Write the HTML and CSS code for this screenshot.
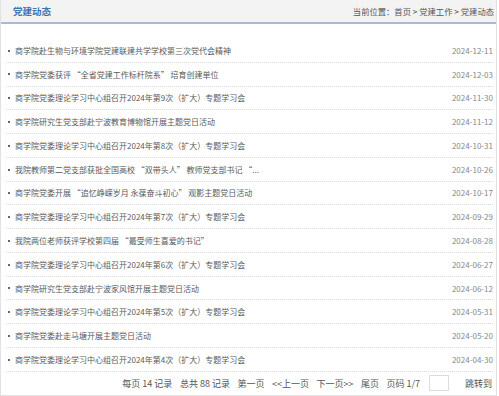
FILE: index.html
```html
<!DOCTYPE html>
<html lang="zh-CN">
<head>
    <meta charset="UTF-8">
    <title>党建动态</title>
    <link rel="stylesheet" href="styles.css">
</head>
<body>
    <div class="panel">
        <div class="panel-head">
            <h2>党建动态</h2>
            <div class="crumbs">当前位置：<a href="#">首页</a> &gt; <a href="#">党建工作</a> &gt; <a href="#">党建动态</a></div>
        </div>

        <ul class="news">
            <li><a href="#">商学院赴生物与环境学院党建联建共学学校第三次党代会精神</a><span class="date">2024-12-11</span></li>
            <li><a href="#">商学院党委获评 “全省党建工作标杆院系” 培育创建单位</a><span class="date">2024-12-03</span></li>
            <li><a href="#">商学院党委理论学习中心组召开2024年第9次（扩大）专题学习会</a><span class="date">2024-11-30</span></li>
            <li><a href="#">商学院研究生党支部赴宁波教育博物馆开展主题党日活动</a><span class="date">2024-11-12</span></li>
            <li><a href="#">商学院党委理论学习中心组召开2024年第8次（扩大）专题学习会</a><span class="date">2024-10-31</span></li>
            <li><a href="#">我院教师第二党支部获批全国高校 “双带头人” 教师党支部书记 “...</a><span class="date">2024-10-26</span></li>
            <li><a href="#">商学院党委开展 “追忆峥嵘岁月 永葆奋斗初心” 观影主题党日活动</a><span class="date">2024-10-17</span></li>
            <li><a href="#">商学院党委理论学习中心组召开2024年第7次（扩大）专题学习会</a><span class="date">2024-09-29</span></li>
            <li><a href="#">我院两位老师获评学校第四届 “最受师生喜爱的书记”</a><span class="date">2024-08-28</span></li>
            <li><a href="#">商学院党委理论学习中心组召开2024年第6次（扩大）专题学习会</a><span class="date">2024-06-27</span></li>
            <li><a href="#">商学院研究生党支部赴宁波家风馆开展主题党日活动</a><span class="date">2024-06-12</span></li>
            <li><a href="#">商学院党委理论学习中心组召开2024年第5次（扩大）专题学习会</a><span class="date">2024-05-31</span></li>
            <li><a href="#">商学院党委赴走马塘开展主题党日活动</a><span class="date">2024-05-20</span></li>
            <li><a href="#">商学院党委理论学习中心组召开2024年第4次（扩大）专题学习会</a><span class="date">2024-04-30</span></li>
        </ul>

        <div class="pager">
            <span>每页 14 记录</span>
            <span>总共 88 记录</span>
            <a href="#">第一页</a>
            <a href="#">&lt;&lt;上一页</a>
            <a href="#">下一页&gt;&gt;</a>
            <a href="#">尾页</a>
            <span>页码 1/7</span>
            <input type="text" class="page-input">
            <a href="#" class="jump">跳转到</a>
        </div>
    </div>
</body>
</html>
```

FILE: styles.css
```css
body {
    margin: 0;
    padding: 0;
    background: #fff;
    font-family: "Noto Sans CJK SC", sans-serif;
}
a {
    color: inherit;
    text-decoration: none;
}
.panel {
    width: 497px;
    height: 396px;
    box-sizing: border-box;
    border: 1px solid #e2e2e2;
    border-top: none;
}
.panel-head {
    display: flex;
    justify-content: space-between;
    align-items: center;
    height: 22px;
    padding: 0 2px 0 12px;
    background: #f3f3f3;
    border-bottom: 2px solid #a9b9d6;
}
.panel-head h2 {
    margin: 0;
    font-size: 9.5px;
    font-weight: bold;
    color: #3f73b8;
}
.crumbs {
    font-size: 8.3px;
    color: #555;
}
.news {
    list-style: none;
    margin: 15px 0 0;
    padding: 0 3px 0 5px;
}
.news li {
    display: flex;
    justify-content: space-between;
    align-items: center;
    height: 23.77px;
    box-sizing: border-box;
    border-bottom: 1px dotted #d6d6d6;
    font-size: 8px;
    color: #5a5a5a;
}
.news li a::before {
    content: "";
    display: inline-block;
    width: 2px;
    height: 2px;
    background: #666;
    margin: 0 5px 2px 2px;
    vertical-align: middle;
}
.date {
    color: #888;
}
.pager {
    display: flex;
    justify-content: flex-end;
    align-items: center;
    gap: 7.5px;
    height: 23px;
    padding-right: 4px;
    font-size: 9px;
    color: #555;
}
.page-input {
    width: 18px;
    height: 14px;
    padding: 0;
    border: 1px solid #ddd;
    margin: 0 8px 0 2px;
}
```
